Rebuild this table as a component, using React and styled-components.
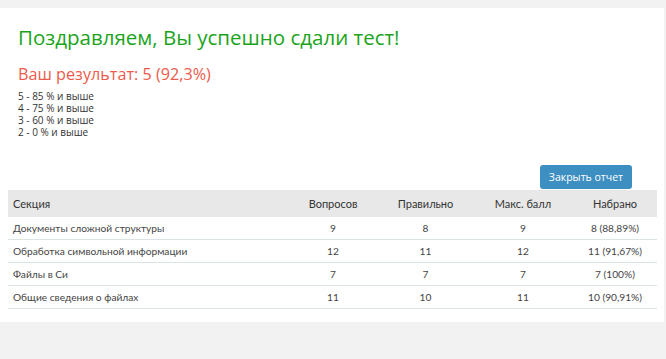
import React from "react"
import styled, { createGlobalStyle } from "styled-components"

const GlobalStyle = createGlobalStyle`
  html, body {
    margin: 0;
    padding: 0;
    background: #f2f2f2;
  }
  body {
    font-family: "Open Sans", "Liberation Sans", sans-serif;
  }
`

const Panel = styled.div`
  margin: 8px 2px 0 0;
  background: #ffffff;
  padding: 0 8px 13px 8px;
  display: flex;
  flex-direction: column;
`

const Intro = styled.div`
  padding: 17px 10px 0 10px;
  display: flex;
  flex-direction: column;
`

const Title = styled.h1`
  margin: 0;
  font-family: "Open Sans", sans-serif;
  font-weight: 400;
  font-size: 20.5px;
  line-height: 24px;
  color: #1ba41b;
`

const Result = styled.h2`
  margin: 15px 0 0 0;
  font-family: "Open Sans", sans-serif;
  font-weight: 400;
  font-size: 16.2px;
  line-height: 20px;
  color: #ec5b4c;
`

const Grades = styled.div`
  margin-top: 6px;
  font-family: "Open Sans", sans-serif;
  font-size: 10px;
  line-height: 12px;
  color: #333;
`

const Toolbar = styled.div`
  display: flex;
  justify-content: flex-end;
  padding-right: 24px;
  margin-top: 27px;
  margin-bottom: 1px;
`

const Button = styled.button`
  height: 24px;
  padding: 0 9px;
  border: none;
  border-radius: 3px;
  background: #3d8fc2;
  color: #ffffff;
  font-family: "Open Sans", sans-serif;
  font-size: 10.5px;
  cursor: pointer;
`

const Table = styled.table`
  width: 100%;
  border-collapse: collapse;
  table-layout: fixed;
  font-family: "Lato", sans-serif;
  color: #444;
`

const HeadCell = styled.th`
  box-sizing: border-box;
  height: 27px;
  padding: 0 5px;
  background: #e8e8e8;
  font-weight: 400;
  font-size: 11px;
  color: #333;
  text-align: ${p => (p.$left ? "left" : "center")};
  width: ${p => p.$w}px;
`

const Row = styled.tr`
  border-bottom: 1px solid #dbe3e6;
`

const Cell = styled.td`
  height: 22px;
  padding: 0 5px;
  font-size: 10.2px;
  text-align: ${p => (p.$left ? "left" : "center")};
`

const columns = [
  { label: "Секция", w: 280, left: true },
  { label: "Вопросов", w: 90 },
  { label: "Правильно", w: 95 },
  { label: "Макс. балл", w: 100 },
  { label: "Набрано", w: 84 },
]

const rows = [
  ["Документы сложной структуры", "9", "8", "9", "8 (88,89%)"],
  ["Обработка символьной информации", "12", "11", "12", "11 (91,67%)"],
  ["Файлы в Си", "7", "7", "7", "7 (100%)"],
  ["Общие сведения о файлах", "11", "10", "11", "10 (90,91%)"],
]

const grades = ["5 - 85 % и выше", "4 - 75 % и выше", "3 - 60 % и выше", "2 - 0 % и выше"]

export default function App() {
  return (
    <>
      <GlobalStyle />
      <Panel>
        <Intro>
          <Title>Поздравляем, Вы успешно сдали тест!</Title>
          <Result>Ваш результат: 5 (92,3%)</Result>
          <Grades>
            {grades.map(g => (
              <div key={g}>{g}</div>
            ))}
          </Grades>
        </Intro>

        <Toolbar>
          <Button>Закрыть отчет</Button>
        </Toolbar>

        <Table>
          <thead>
            <tr>
              {columns.map(c => (
                <HeadCell key={c.label} $w={c.w} $left={c.left}>
                  {c.label}
                </HeadCell>
              ))}
            </tr>
          </thead>
          <tbody>
            {rows.map(r => (
              <Row key={r[0]}>
                {r.map((v, i) => (
                  <Cell key={i} $left={i === 0}>
                    {v}
                  </Cell>
                ))}
              </Row>
            ))}
          </tbody>
        </Table>
      </Panel>
    </>
  )
}
